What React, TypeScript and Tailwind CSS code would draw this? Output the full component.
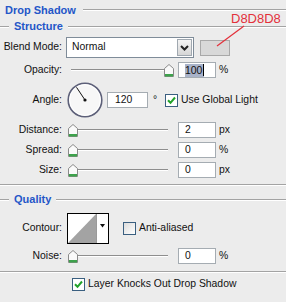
import React from 'react';

// Photoshop-style "Drop Shadow" layer style panel

function Etched({ className = '' }: { className?: string }) {
	return <div className={`h-[2px] border-t border-[#a3a3a3] border-b border-b-white ${className}`} />;
}

function GroupTitle({ title }: { title: string }) {
	return (
		<div className="flex h-[13px] items-center">
			<Etched className="w-[9px]" />
			<span className="ml-[5px] text-[11px] font-bold text-[#2456c8]">{title}</span>
			<Etched className="ml-[5px] flex-1" />
		</div>
	);
}

function Label({ children }: { children: React.ReactNode }) {
	return <div className="w-[62px] shrink-0 text-right">{children}</div>;
}

function Thumb() {
	return (
		<svg width="10" height="13" viewBox="0 0 10 13">
			<path d="M0.5 4.5 L5 0.5 L9.5 4.5 V12.5 H0.5 Z" fill="#fafafa" stroke="#8a8a8a" />
			<rect x="1" y="10" width="8" height="2.5" fill="#3ea24c" />
		</svg>
	);
}

function Slider({ pos }: { pos: number }) {
	return (
		<div className="relative ml-[4px] h-[16px] w-[108px] shrink-0">
			<div className="absolute left-[5px] right-[6px] top-[7px] h-[2px] border-t border-[#8e8e8e] border-b border-b-white" />
			<div className="absolute top-[2px]" style={{ left: 2 + pos * 96 }}>
				<Thumb />
			</div>
		</div>
	);
}

function NumBox({ value, selected }: { value: string; selected?: boolean }) {
	return (
		<div className="ml-[4px] flex h-[16px] w-[38px] shrink-0 items-center border border-[#a5acb2] bg-white pl-[6px]">
			{selected ? (
				<span className="flex items-center bg-[#a9b3c9] leading-[13px]">
					{value}
					<span className="ml-[1px] h-[12px] w-[1px] bg-black" />
				</span>
			) : (
				value
			)}
		</div>
	);
}

function Check({ checked }: { checked: boolean }) {
	return (
		<div
			className={`flex h-[13px] w-[13px] shrink-0 items-center justify-center border border-[#3a5f80] ${
				checked ? 'bg-white' : 'bg-gradient-to-br from-[#dcdcdc] to-white'
			}`}
		>
			{checked && (
				<svg width="9" height="9" viewBox="0 0 9 9">
					<path d="M1 4.2 L3.5 6.8 L8 1.5" fill="none" stroke="#22a22a" strokeWidth="2" />
				</svg>
			)}
		</div>
	);
}

function SliderRow({ label, pos, value, unit, className = '' }: { label: string; pos: number; value: string; unit: string; className?: string }) {
	return (
		<div className={`flex h-[16px] items-center ${className}`}>
			<Label>{label}</Label>
			<Slider pos={pos} />
			<NumBox value={value} />
			<span className="ml-[3px]">{unit}</span>
		</div>
	);
}

export default function App(): React.ReactElement {
	return (
		<div className="relative h-[302px] w-[286px] overflow-hidden bg-[#ececec] text-[10.4px] leading-none text-[#111] [font-family:'Liberation_Sans',Arial,sans-serif]">
			{/* Header */}
			<div className="flex h-[20px] items-center pl-[5px]">
				<span className="text-[11px] font-bold text-[#2456c8]">Drop Shadow</span>
				<Etched className="ml-[7px] flex-1" />
			</div>

			{/* Structure */}
			<GroupTitle title="Structure" />

			<div className="mt-[4px] flex h-[21px] items-center">
				<Label>Blend Mode:</Label>
				<div className="ml-[4px] flex h-[21px] w-[128px] items-stretch border border-[#7f8c99] bg-white">
					<span className="flex flex-1 items-center pl-[5px]">Normal</span>
					<div className="m-[1px] flex w-[15px] items-center justify-center border border-[#a0a8b0] bg-gradient-to-b from-[#f4f4f4] to-[#d6d6d6]">
						<svg width="9" height="6" viewBox="0 0 9 6">
							<path d="M1 1 L4.5 4.5 L8 1" fill="none" stroke="#222" strokeWidth="2" />
						</svg>
					</div>
				</div>
				<div className="ml-[6px] h-[16px] w-[30px] border border-[#a8a8a8] bg-[#d8d8d8]" />
			</div>

			<div className="mt-[4px] flex h-[16px] items-center">
				<Label>Opacity:</Label>
				<Slider pos={1} />
				<NumBox value="100" selected />
				<span className="ml-[3px]">%</span>
			</div>

			<div className="mt-[4px] flex h-[36px] items-center">
				<Label>Angle:</Label>
				<svg className="ml-[5px] shrink-0" width="36" height="36" viewBox="0 0 36 36">
					<circle cx="18" cy="18" r="16.8" fill="#f7f7f7" stroke="#5d6079" strokeWidth="1.6" />
					<circle cx="18" cy="18" r="15.3" fill="none" stroke="#ffffff" strokeWidth="1" />
					<line x1="18" y1="18" x2="9.5" y2="5.3" stroke="#111" strokeWidth="1" />
					<circle cx="18" cy="18" r="1.6" fill="#111" />
				</svg>
				<div className="ml-[4px] flex h-[16px] w-[41px] shrink-0 items-center border border-[#a5acb2] bg-white pl-[7px]">120</div>
				<span className="w-[17px] shrink-0 self-start pl-[5px] pt-[13px]">°</span>
				<Check checked />
				<span className="ml-[3px]">Use Global Light</span>
			</div>

			<SliderRow className="mt-[4px]" label="Distance:" pos={0} value="2" unit="px" />
			<SliderRow className="mt-[4px]" label="Spread:" pos={0} value="0" unit="%" />
			<SliderRow className="mt-[4px]" label="Size:" pos={0} value="0" unit="px" />

			<Etched className="mt-[6px]" />

			{/* Quality */}
			<div className="mt-[7px]">
				<GroupTitle title="Quality" />
			</div>

			<div className="mt-[7px] flex h-[31px] items-center">
				<Label>Contour:</Label>
				<div className="ml-[5px] flex h-[31px] w-[42px] shrink-0 border border-black bg-white">
					<svg width="28" height="29" viewBox="0 0 28 29" className="shrink-0">
						<path d="M0 29 L28 0 V29 Z" fill="#a3a3a3" />
					</svg>
					<div className="flex flex-1 justify-center border-l border-[#9a9a9a] pt-[10px]">
						<svg width="5" height="4" viewBox="0 0 5 4">
							<path d="M0 0 H5 L2.5 3.5 Z" fill="#111" />
						</svg>
					</div>
				</div>
				<div className="ml-[14px]">
					<Check checked={false} />
				</div>
				<span className="ml-[3px]">Anti-aliased</span>
			</div>

			<SliderRow className="mt-[4px]" label="Noise:" pos={0} value="0" unit="%" />

			<Etched className="mt-[7px]" />

			<div className="mt-[5px] flex h-[13px] items-center pl-[72px]">
				<Check checked />
				<span className="ml-[3px]">Layer Knocks Out Drop Shadow</span>
			</div>

			{/* Colour annotation */}
			<span className="absolute left-[231px] top-[12px] text-[13px] text-[#e3303a]">D8D8D8</span>
			<svg className="absolute left-[216px] top-[25px]" width="30" height="22" viewBox="0 0 30 22">
				<line x1="1" y1="21" x2="28" y2="1" stroke="#e3303a" strokeWidth="1.2" />
			</svg>
		</div>
	);
}
